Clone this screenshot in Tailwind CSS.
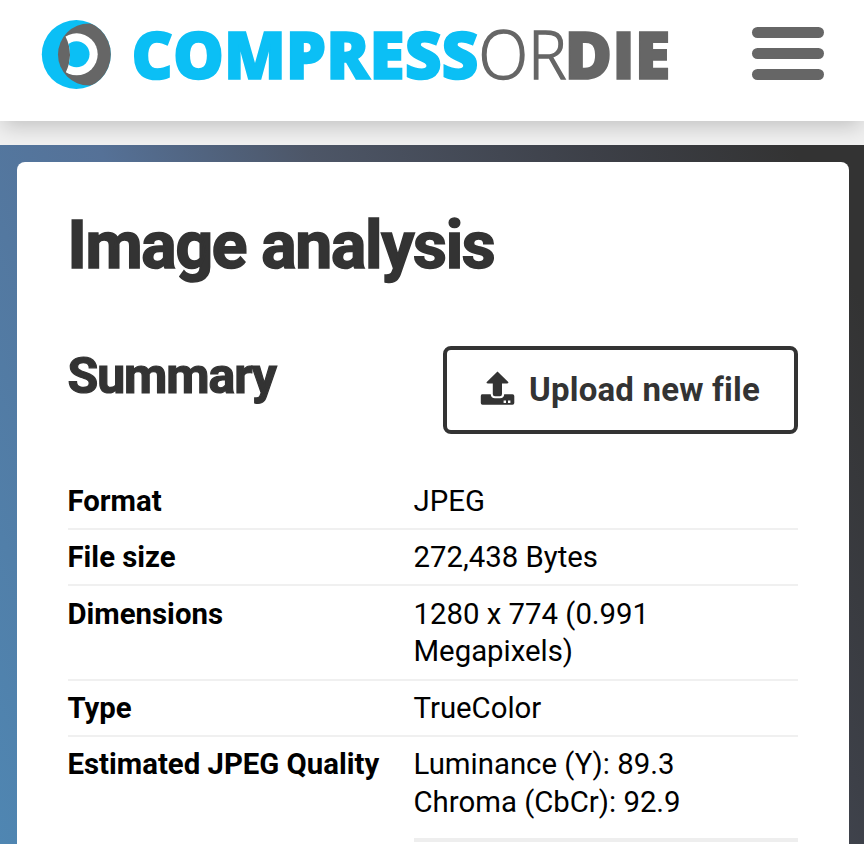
<!DOCTYPE html>
<html lang="en">
<head>
<meta charset="utf-8">
<title>Image analysis</title>
<script src="https://cdn.jsdelivr.net/npm/@tailwindcss/browser@4"></script>
</head>
<body class="h-[844px] overflow-hidden bg-[#f0f0f0] font-['Roboto',sans-serif] text-black">
<header class="relative flex h-[121px] items-start justify-between bg-white pr-10 shadow-[0_8px_20px_-3px_rgba(0,0,0,0.2)]">
  <svg class="block h-[110px] w-[690px]" viewBox="0 0 690 110" role="img" aria-label="CompressOrDie">
    <defs>
      <clipPath id="disc"><circle cx="76.3" cy="54.5" r="34.5"/></clipPath>
      <clipPath id="cut"><path d="M65.5 36.5Q74.5 54.5 65.5 73V90H112V20H65.5Z"/></clipPath>
    </defs>
    <circle cx="76.3" cy="54.5" r="34.5" fill="#0bbff5"/>
    <circle cx="89" cy="54.5" r="31" fill="#666" clip-path="url(#disc)"/>
    <g clip-path="url(#cut)">
      <circle cx="76.7" cy="54.3" r="21" fill="#fff"/>
      <circle cx="76.5" cy="54.3" r="13" fill="#0bbff5"/>
    </g>
    <g font-family="'Open Sans','Noto Sans',sans-serif" font-size="65.5">
      <text x="131.5" y="78.7" font-weight="800" fill="#0bbff5" stroke="#0bbff5" stroke-width="1.6" textLength="347" lengthAdjust="spacingAndGlyphs">COMPRESS</text>
      <text x="478.5" y="79" font-weight="300" fill="#666" stroke="#666" stroke-width="1.5" textLength="88" lengthAdjust="spacingAndGlyphs">OR</text>
      <text x="564.5" y="78.7" font-weight="800" fill="#666" stroke="#666" stroke-width="1.6" textLength="106" lengthAdjust="spacingAndGlyphs">DIE</text>
    </g>
  </svg>
  <div class="mt-[27px] flex w-[72px] flex-col gap-[10.5px]">
    <i class="block h-[10.6px] rounded-full bg-[#666]"></i>
    <i class="block h-[10.6px] rounded-full bg-[#666]"></i>
    <i class="block h-[10.6px] rounded-full bg-[#666]"></i>
  </div>
</header>
<main class="mt-6 h-[699px] bg-[linear-gradient(67deg,#4f86b2_0%,#557197_34%,#4d5667_52%,#3d4048_76%,#333333_94%)] pt-[17px] pr-[15px] pl-[17px]">
  <section class="h-[720px] rounded-t-[8px] bg-white pr-[51px] pl-[50.5px]">
    <h1 class="pt-[44px] text-[66px] leading-[80px] font-bold tracking-[-1.3px] text-[#333] [-webkit-text-stroke:1.6px_#333]">Image analysis</h1>
    <div class="mt-[60px] flex justify-between">
      <h2 class="text-[50px] leading-[60px] font-bold tracking-[-1.1px] text-[#333] [-webkit-text-stroke:1.2px_#333]">Summary</h2>
      <button class="flex h-[88px] w-[355px] items-center rounded-[8px] border-4 border-[#333] pl-[33px] text-[33px] font-bold tracking-[0.2px] text-[#333]">
        <svg class="mr-[14px] h-[34px] w-[35px] -translate-y-[2px]" viewBox="0 0 35 34" fill="#333">
          <path d="M17.5.5 28 10.8Q29.2 12.4 27 12.4H22V23Q22 25.2 20 25.2H15Q12.8 25.2 12.8 23V12.4H8Q5.6 12.4 7 10.8Z"/>
          <path fill-rule="evenodd" d="M2 23.3H10.7Q11 27.3 15 27.3H20Q24 27.3 24.2 23.3H32.5Q34.3 23.3 34.3 25V32Q34.3 33.7 32.5 33.7H2.5Q.8 33.7.8 32V25Q.8 23.3 2 23.3ZM23.6 29.5V32H26V29.5ZM28 29.5V32H30.4V29.5Z"/>
        </svg>
        <span>Upload new file</span>
      </button>
    </div>
    <dl class="mt-[40px] text-[29.35px] leading-[38px]">
      <div class="grid h-[56px] grid-cols-[346px_1fr] border-b-2 border-[#f0f0f0] pt-2"><dt class="font-bold">Format</dt><dd>JPEG</dd></div>
      <div class="grid h-[56px] grid-cols-[346px_1fr] border-b-2 border-[#f0f0f0] pt-2"><dt class="font-bold">File size</dt><dd>272,438 Bytes</dd></div>
      <div class="grid h-[95px] grid-cols-[346px_1fr] border-b-2 border-[#f0f0f0] pt-[9.5px] leading-[37.5px]"><dt class="font-bold">Dimensions</dt><dd>1280 x 774 (0.991<br>Megapixels)</dd></div>
      <div class="grid h-[56px] grid-cols-[346px_1fr] border-b-2 border-[#f0f0f0] pt-2"><dt class="font-bold">Type</dt><dd>TrueColor</dd></div>
      <div class="grid grid-cols-[346px_1fr] pt-2"><dt class="font-bold">Estimated JPEG Quality</dt><dd>Luminance (Y): 89.3<br>Chroma (CbCr): 92.9<hr class="mt-[17px] border-t-4 border-[#eee]"></dd></div>
    </dl>
  </section>
</main>
</body>
</html>
